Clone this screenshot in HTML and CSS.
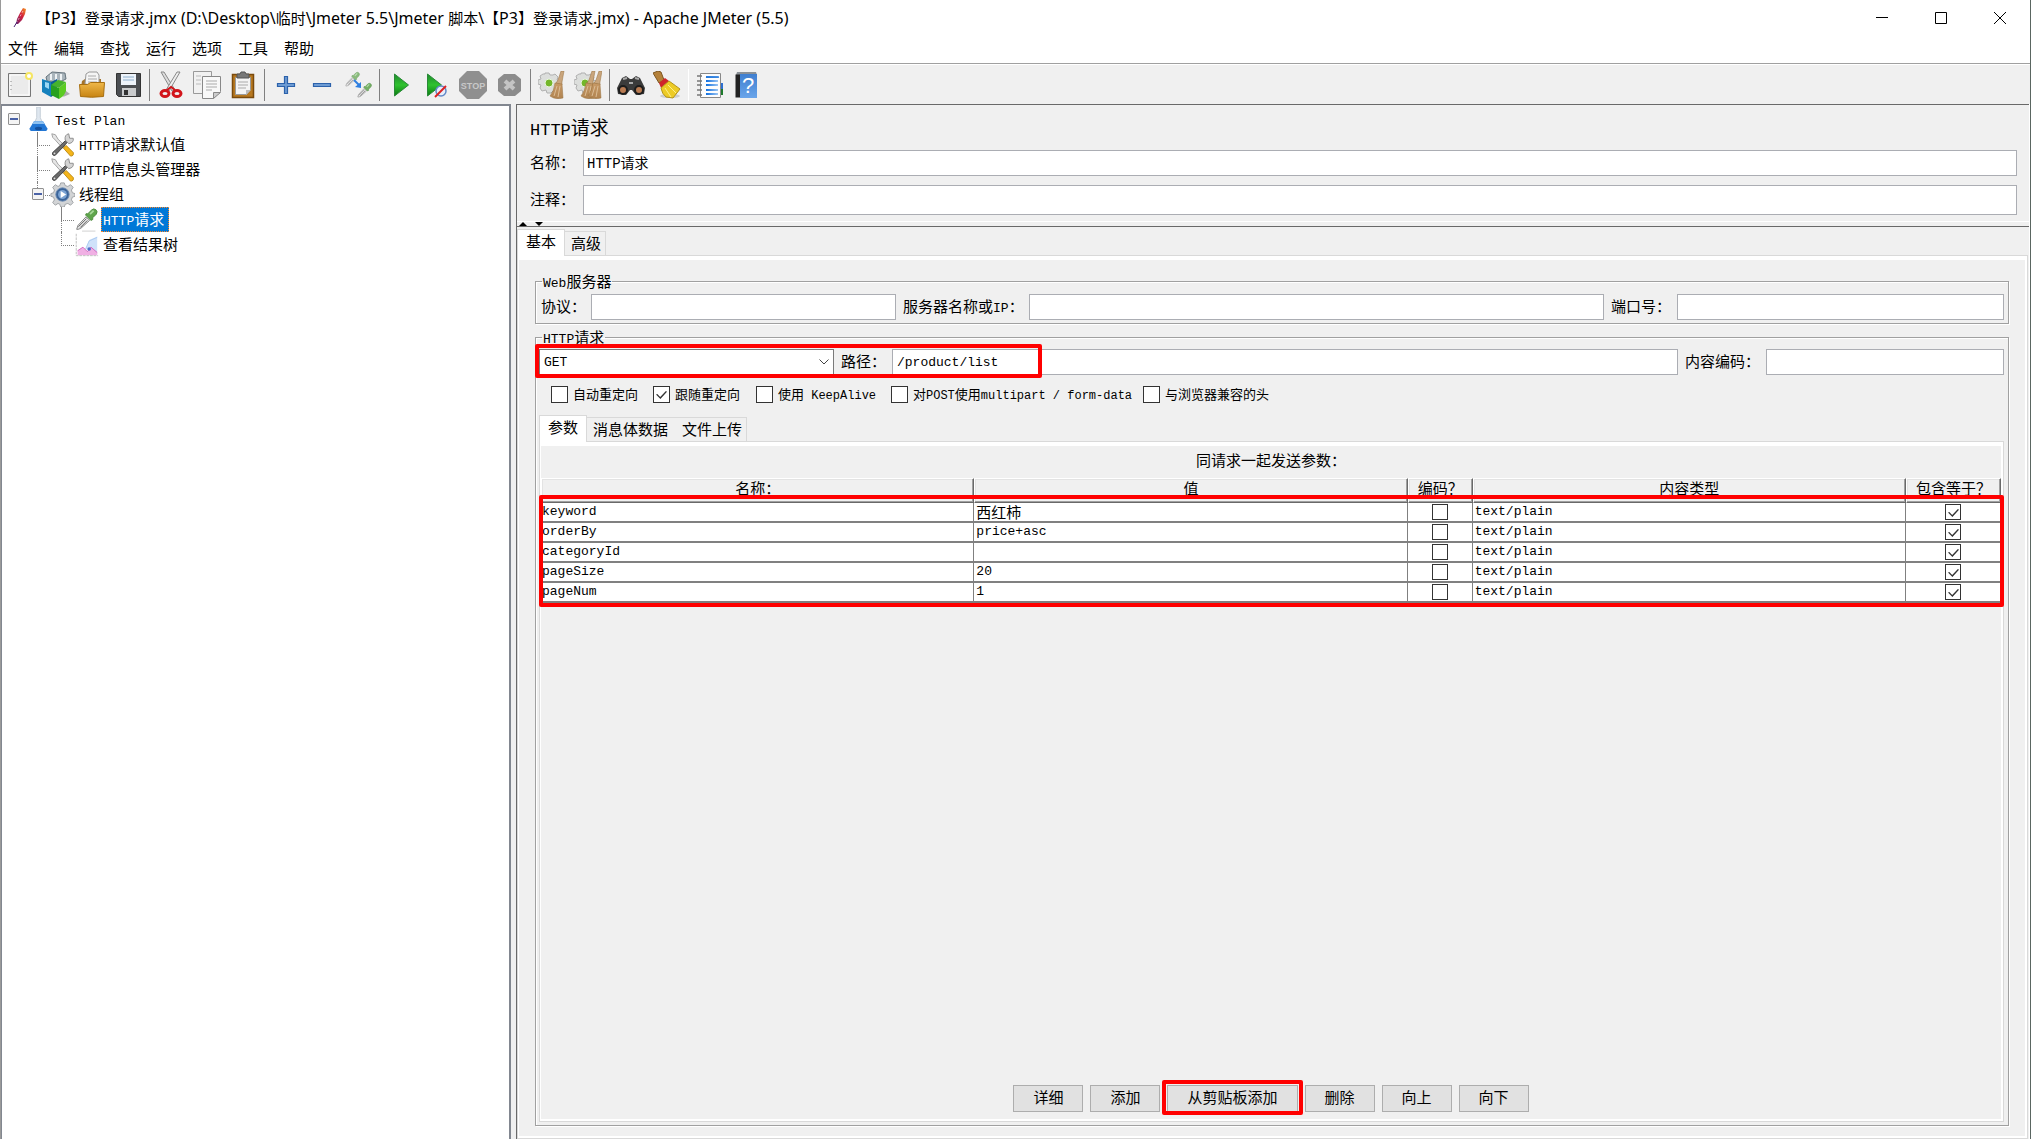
FILE: index.html
```html
<!DOCTYPE html>
<html lang="zh-CN">
<head>
<meta charset="utf-8">
<title>Apache JMeter (5.5)</title>
<link rel="stylesheet" href="styles.css">
</head>
<body>
<svg class="defs" aria-hidden="true">
  <defs>
    <linearGradient id="gold" x1="0" y1="0" x2="0" y2="1"><stop offset="0" stop-color="#efb84a"/><stop offset="1" stop-color="#c78412"/></linearGradient>
    <linearGradient id="green" x1="0" y1="0" x2="0" y2="1"><stop offset="0" stop-color="#1f8a2e"/><stop offset=".5" stop-color="#2fc22f"/><stop offset="1" stop-color="#0b7a12"/></linearGradient>
    <linearGradient id="blue" x1="0" y1="0" x2="0" y2="1"><stop offset="0" stop-color="#3f7fd0"/><stop offset="1" stop-color="#6aa5ea"/></linearGradient>
    <linearGradient id="line-blue" gradientUnits="userSpaceOnUse" x1="10" y1="0" x2="23" y2="0"><stop offset="0" stop-color="#0f6fe0"/><stop offset="1" stop-color="#a8cdf5"/></linearGradient>
    <linearGradient id="straw" x1="0" y1="0" x2="0" y2="1"><stop offset="0" stop-color="#c89a66"/><stop offset="1" stop-color="#b08350"/></linearGradient>
    <linearGradient id="feather" x1="1" y1="0" x2="0" y2="1"><stop offset="0" stop-color="#f59a23"/><stop offset=".45" stop-color="#d3213c"/><stop offset="1" stop-color="#6d2370"/></linearGradient>
    <g id="dropper">
      <path d="M3 25l1.500-4.500 9-9.500 4 4-10 9-3 1z" fill="#e9e9e9" stroke="#777"/>
      <path d="M5 22l9-9M7 23l8-8" stroke="#555" stroke-width="1"/>
      <path d="M13 9l6 6 2-1 0-2 4-4q2-3-.5-5t-5 .5l-4 4-2 0z" fill="#5fa54c" stroke="#4a8a3b"/>
      <path d="M18 8l4-4" stroke="#a8d89a" stroke-width="2"/>
    </g>
    <g id="tools">
      <path d="M2 2l4 1 3 5 8 8-3 2-8-9-3-3z" fill="#e6e6e6" stroke="#999"/>
      <path d="M15 18l3-3 8 8q1 4-3 4z" fill="#f5b51a" stroke="#b8860b"/>
      <path d="M3 23L18 9l2 2L6 26q-4 1-3-3z" fill="#6b6b6b" stroke="#3c3c3c"/>
      <path d="M17 9q-1-6 4-7l1 5 4 0q1 5-5 6z" fill="#d4d4d4" stroke="#888"/>
      <circle cx="5" cy="24" r="1" fill="#ddd"/>
    </g>
    <path id="cog" d="M12 1h4l1 3 3 1 3-2 3 3-2 3 1 3 3 1v3l-3 1-1 3 2 3-3 3-3-2-3 1-1 3h-4l-1-3-2-1-3 2-3-3 2-3-1-3-3-1v-3l3-1 1-3-2-3 3-3 3 2 2-1z"/>
    <g id="smallcog">
      <path d="M7 2h4l1 2h3l2-1 3 3-1 3 3 1v5l-3 1v4h-4l-2 2H9l-1-3-4 1-2-3 1-3-3-1v-4l3-1-1-3 3-2h2z" fill="#dcdedc" stroke="#b0b0b0"/>
      <circle cx="11" cy="12" r="4" fill="#74b72b" stroke="#e9f4df"/>
    </g>
    <g id="brush">
      <path d="M15 0h3l-2 11 0 3-6-2 2-3z" fill="#c9a57c" stroke="#96703f" stroke-width=".5"/>
      <path d="M9 12l7 1 1 14q-8 2-13-2 4-5 5-13z" fill="url(#straw)" stroke="#96703f" stroke-width=".5"/>
      <path d="M11 15L8 25M14 15l-2 11" stroke="#dcbd95"/>
    </g>
  </defs>
</svg>

<div class="window">
  <header class="titlebar">
    <svg class="app-icon" viewBox="0 0 16 20" aria-hidden="true"><path d="M11 0l3 1-1 5-3 6-4 4-2 0 1-5 3-6z" fill="url(#feather)"/><path d="M5 14L2 19" stroke="#4b2470"/><path d="M11 3L5 14" stroke="#fff" stroke-width=".6" stroke-dasharray="2 2"/></svg>
    <h1 class="title"><span class="cn">【</span>P3<span class="cn">】登录请求</span>.jmx (D:\Desktop\<span class="cn">临时</span>\Jmeter 5.5\Jmeter <span class="cn">脚本</span>\<span class="cn">【</span>P3<span class="cn">】登录请求</span>.jmx) - Apache JMeter (5.5)</h1>
    <div class="win-buttons">
      <button type="button" aria-label="最小化"><svg viewBox="0 0 12 12"><path d="M0 5.500h12"/></svg></button>
      <button type="button" aria-label="最大化"><svg viewBox="0 0 12 12"><path d="M.5.5h11v11H.5z"/></svg></button>
      <button type="button" aria-label="关闭"><svg viewBox="0 0 12 12"><path d="M0 0l12 12M12 0L0 12"/></svg></button>
    </div>
  </header>
  <nav class="menubar">
    <button type="button">文件</button><button type="button">编辑</button><button type="button">查找</button><button type="button">运行</button><button type="button">选项</button><button type="button">工具</button><button type="button">帮助</button>
  </nav>

  <div class="toolbar" role="toolbar">
    <button type="button" aria-label="新建"><svg viewBox="0 0 28 28"><path d="M2.500 2.500h22v23h-22z" fill="#ebebeb" stroke="#777"/><path d="M4 4h19v20H4z" fill="none" stroke="#fff"/><path d="M5 10v1M5 14v1M5 18v1" stroke="#888"/><circle cx="23" cy="5" r="3" fill="#fff" stroke="#f5e663" stroke-width="2"/></svg></button>
    <button type="button" aria-label="模板"><svg viewBox="0 0 28 28"><path d="M4 6l6-5 13 1 1 6-8 4-11-2z" fill="#a9b4bb" stroke="#66747d"/><path d="M9 3v6M14 3v6M19 3v6" stroke="#eef2f4" stroke-width="2"/><path d="M0 8l9 3v15l-9-5z" fill="#1681bd"/><path d="M3 11l4 1v6l-4-2z" fill="#9cd8f5"/><path d="M9 11l6-3v14l-6 4z" fill="#0d5d94"/><path d="M9 14l8 3v11l-8-4z" fill="#27a01f"/><path d="M17 17l7-6v12l-7 5z" fill="#5bcb22"/><path d="M9 14l7-5 8 2-7 6z" fill="#46b32c"/><path d="M24 20l4 3-7 3z" fill="#aaa"/></svg></button>
    <button type="button" aria-label="打开"><svg viewBox="0 0 28 28"><path d="M4 10l3-2h16v8H3z" fill="#a5742b"/><path d="M7 13l1-10 3-2h8l2 3v11z" fill="#f5f5f5" stroke="#999"/><path d="M10 5h8M10 8h9M10 11h9" stroke="#aaa"/><path d="M1.500 13.500h8l3-2h14l-1 14q-12 1.500-23 0z" fill="url(#gold)" stroke="#a86f10"/></svg></button>
    <button type="button" aria-label="保存"><svg viewBox="0 0 28 28"><path d="M2.500 2.500h24v23h-22l-2-2z" fill="#4b4e52" stroke="#333"/><path d="M7 3h15v11H7z" fill="#edf3fa"/><path d="M9 6h11M9 9h11" stroke="#8caecc"/><path d="M8 17h14v8H8z" fill="#c9cbcd"/><path d="M10 19h4v5h-4z" fill="#333"/></svg></button>
    <span class="sep"></span>
    <button type="button" aria-label="剪切"><svg viewBox="0 0 28 28"><path d="M4 1l3 0 11 18-3 1z" fill="#ddd" stroke="#888"/><path d="M23 1l-3 0L9 19l3 1z" fill="#eee" stroke="#888"/><ellipse cx="8" cy="22.500" rx="4" ry="3" fill="none" stroke="#d2151b" stroke-width="3"/><ellipse cx="20" cy="22.500" rx="4" ry="3" fill="none" stroke="#d2151b" stroke-width="3"/><path d="M10 19l4-3 4 3" fill="none" stroke="#d2151b" stroke-width="2"/></svg></button>
    <button type="button" aria-label="复制"><svg viewBox="0 0 28 28"><path d="M.5.5h18v22H.5z" fill="#f1f1f1" stroke="#999"/><path d="M3 5h5M3 9h5M3 13h5" stroke="#bbb"/><path d="M9.500 5.500h18v15l-7 7h-11z" fill="#f8f8f8" stroke="#888"/><path d="M13 10h11M13 13h11M13 16h11M13 19h6" stroke="#aaa"/><path d="M20.500 27.500v-6h7z" fill="#ccc" stroke="#888"/></svg></button>
    <button type="button" aria-label="粘贴"><svg viewBox="0 0 28 28"><path d="M3.500 3.500h21v23h-21z" fill="#b7781f" stroke="#7a4a0c" stroke-width="1.500"/><path d="M6.500 6.500h15v12l-4 5h-11z" fill="#f4f4f4" stroke="#999"/><path d="M9 11h10M9 14h10M9 17h8" stroke="#aaa"/><path d="M8 3h3l1-2h4l1 2h3v4H8z" fill="#777" stroke="#555"/><path d="M17 24v-5h5z" fill="#bbb"/></svg></button>
    <span class="sep"></span>
    <button type="button" aria-label="展开"><svg viewBox="0 0 28 28"><path d="M12.500 5.500h3v7h7v3h-7v7h-3v-7h-7v-3h7z" fill="#6d9bd3" stroke="#2c62ab" stroke-width="1.200"/></svg></button>
    <button type="button" aria-label="收起"><svg viewBox="0 0 28 28"><path d="M5.500 12.500h17v3h-17z" fill="#6d9bd3" stroke="#2c62ab" stroke-width="1.200"/></svg></button>
    <button type="button" aria-label="切换"><svg viewBox="0 0 28 28"><g transform="scale(.6)" opacity=".7"><use href="#dropper"/></g><g transform="translate(12 11) scale(.6)" opacity=".85"><use href="#dropper"/></g><path d="M10 9l5 5" stroke="#2f7fe0" stroke-width="2"/><path d="M17 11v6l-6-1z" fill="#2f7fe0"/></svg></button>
    <span class="sep"></span>
    <button type="button" aria-label="启动"><svg viewBox="0 0 28 28"><path d="M7.500 3l14 11-14 11z" fill="url(#green)" stroke="#2a8a38"/></svg></button>
    <button type="button" aria-label="不停顿开始"><svg viewBox="0 0 28 28"><path d="M4.500 3l14 11-14 11z" fill="url(#green)" stroke="#2a8a38"/><circle cx="18" cy="20" r="5" fill="#e8eefa" stroke="#6489c7" stroke-width="1.500"/><path d="M12 26L23 15" stroke="#d22" stroke-width="2"/></svg></button>
    <button type="button" aria-label="停止" disabled><svg viewBox="0 0 28 28"><path d="M8 0h12l8 8v12l-8 8H8l-8-8V8z" fill="#8f8f8f"/><text x="14" y="18" text-anchor="middle" class="stop-text">STOP</text></svg></button>
    <button type="button" aria-label="关闭" disabled><svg viewBox="0 0 28 28"><path d="M9 3h11l6 5v12l-6 5H9l-6-5V8z" fill="#8c8c8c"/><path d="M10 10l9 8M19 10l-9 8" stroke="#c4c4c4" stroke-width="4"/></svg></button>
    <span class="sep"></span>
    <button type="button" aria-label="清除"><svg viewBox="0 0 28 28"><use href="#smallcog"/><g transform="translate(8)"><use href="#brush"/></g></svg></button>
    <button type="button" aria-label="清除全部"><svg viewBox="0 0 28 28"><use href="#smallcog"/><g transform="translate(3)"><use href="#brush"/></g><g transform="translate(10)"><use href="#brush"/></g></svg></button>
    <span class="sep"></span>
    <button type="button" aria-label="查找"><svg viewBox="0 0 28 28"><path d="M5 7l4-2 4 3h2l4-3 4 2 5 10-1 6-8 1-4-5h-2l-4 5-8-1-1-6z" fill="#3b3b3b"/><path d="M6 8l4-1M18 7l4 1M12 12h4" stroke="#aaa" stroke-width="2"/><circle cx="6" cy="19" r="4" fill="#b97b52" stroke="#1c1c1c" stroke-width="2"/><circle cx="22" cy="19" r="4" fill="#b97b52" stroke="#1c1c1c" stroke-width="2"/></svg></button>
    <button type="button" aria-label="重置查找"><svg viewBox="0 0 28 28"><ellipse cx="17" cy="25" rx="10" ry="2" fill="#ccc"/><path d="M0 2l5-2 3 1 3 8-5 3z" fill="#b4813a" stroke="#7e5620"/><path d="M6 12l6-5 4 3-8 7z" fill="#d0242a"/><path d="M8 17l8-7q7 5 11 8l-7 9-7-1q-4-3-5-9z" fill="#edcb25" stroke="#b4941a"/><path d="M12 17l6 9M15 14l8 8" stroke="#fdf08a"/></svg></button>
    <span class="sep light"></span>
    <button type="button" aria-label="函数助手"><svg viewBox="0 0 28 28"><path d="M4.500 2.500h20v24h-20z" fill="#fdfdfd" stroke="#888"/><path d="M25 12h2v6h-2z" fill="#2c6fd1"/><path d="M25 18h2v6h-2z" fill="#1d7a2b"/><path d="M1 5h5M1 10h5M1 14h5M1 19h5M1 24h5" stroke="#777" stroke-width="1.500"/><path d="M10 6h12M10 10h12M10 14h12M10 19h12M10 23h12" stroke="url(#line-blue)" stroke-width="2"/><path d="M10 6h13v.1H10z" stroke="#2a7fe0"/></svg></button>
    <button type="button" aria-label="帮助"><svg viewBox="0 0 28 28"><path d="M5 1h19l1 3H4z" fill="#8a9096"/><path d="M3.500 3.500h5v23h-5z" fill="#222"/><path d="M8 3h17v24H8z" fill="url(#blue)"/><text x="16" y="22" text-anchor="middle" class="help-text">?</text></svg></button>
  </div>

  <main class="workspace">
    <nav class="tree" aria-label="测试计划">
      <ul>
        <li>
          <div class="node"><button type="button" class="toggle" aria-label="收起"></button><svg class="node-icon" viewBox="0 0 28 28"><path d="M12 0h4v12l5 11H7l5-11z" fill="#dfe7ef" stroke="#c2cbd4"/><path d="M9 16h10l5 8q0 3-3 3H7q-3 0-3-3z" fill="#2377d4"/><path d="M9 16h10l2 3H7z" fill="#8cc0f0"/><ellipse cx="14" cy="24" rx="4" ry="2" fill="#134f9c"/></svg><span class="node-text"><span class="en">Test Plan</span></span></div>
          <ul>
            <li><div class="node"><svg class="node-icon" viewBox="0 0 28 28"><use href="#tools"/></svg><span class="node-text"><span class="en">HTTP</span>请求默认值</span></div></li>
            <li><div class="node"><svg class="node-icon" viewBox="0 0 28 28"><use href="#tools"/></svg><span class="node-text"><span class="en">HTTP</span>信息头管理器</span></div></li>
            <li>
              <div class="node"><button type="button" class="toggle" aria-label="收起"></button><svg class="node-icon" viewBox="0 0 28 28"><use href="#cog" fill="#d2d4d6" stroke="#9a9da1"/><circle cx="14" cy="14" r="7.500" fill="#3b6499" stroke="#6f8db5"/><circle cx="14" cy="14" r="5" fill="#7ba3d3"/><path d="M12 10l6 4-6 4z" fill="#fff"/></svg><span class="node-text">线程组</span></div>
              <ul>
                <li><div class="node"><svg class="node-icon" viewBox="0 0 28 28"><use href="#dropper"/><path d="M9 27h15" stroke="#ccc"/></svg><span class="node-text selected"><span class="en">HTTP</span>请求</span></div></li>
                <li><div class="node"><svg class="node-icon" viewBox="0 0 28 28"><path d="M13 19l4-10 9-4v20z" fill="#cfe2fa"/><path d="M4 26v-5l6-4 5 5 4-5 7 6v3z" fill="#f0b0e4"/><path d="M4 21l6-4 5 5 4-5 7 6" fill="none" stroke="#d060ba"/><path d="M13 19l4-9 9-4" fill="none" stroke="#a8c9f0"/><path d="M2.500 2v24.500H27" fill="none" stroke="#bbb" stroke-dasharray="3 1"/><circle cx="17" cy="19" r="2" fill="#4d6dc8"/></svg><span class="node-text">查看结果树</span></div></li>
              </ul>
            </li>
          </ul>
        </li>
      </ul>
    </nav>

    <section class="editor">
      <div class="editor-head">
        <h2><span class="en">HTTP</span>请求</h2>
        <div class="head-grid">
          <label for="name">名称：</label><input id="name" class="field" type="text" value="HTTP请求">
          <label for="comment">注释：</label><input id="comment" class="field tall" type="text">
        </div>
      </div>
      <div class="divider"><svg viewBox="0 0 24 4" aria-hidden="true"><path d="M0 4l4-4 4 4zM16 0h8l-4 4z"/></svg></div>

      <div class="tabs main-tabs">
        <button type="button" class="tab active">基本</button><button type="button" class="tab">高级</button>
      </div>
      <div class="pane main-pane">
        <div class="pane-body main-body">
          <fieldset class="group web">
            <legend><span class="en">Web</span>服务器</legend>
            <div class="server-row">
              <label for="protocol">协议：</label><input id="protocol" class="field" type="text">
              <label for="server">服务器名称或<span class="en">IP</span>：</label><input id="server" class="field" type="text">
              <label for="port">端口号：</label><input id="port" class="field" type="text">
            </div>
          </fieldset>

          <fieldset class="group request">
            <legend><span class="en">HTTP</span>请求</legend>
            <div class="request-row">
              <div class="combo">
                <select class="field" aria-label="方法"><option>GET</option><option>POST</option></select>
                <svg viewBox="0 0 10 6" aria-hidden="true"><path d="M.5.5L5 5 9.500.5"/></svg>
              </div>
              <label for="path">路径：</label><input id="path" class="field" type="text" value="/product/list">
              <label for="encoding">内容编码：</label><input id="encoding" class="field" type="text">
              <span class="mark mark-path"></span>
            </div>
            <div class="options">
              <label><input type="checkbox"><span>自动重定向</span></label>
              <label><input type="checkbox" checked><span>跟随重定向</span></label>
              <label><input type="checkbox"><span>使用<span class="en"> KeepAlive</span></span></label>
              <label><input type="checkbox"><span>对<span class="en">POST</span>使用<span class="en">multipart / form-data</span></span></label>
              <label><input type="checkbox"><span>与浏览器兼容的头</span></label>
            </div>
            <div class="tabs">
              <button type="button" class="tab active">参数</button><button type="button" class="tab joined">消息体数据</button><button type="button" class="tab">文件上传</button>
            </div>
            <div class="pane params-pane">
              <div class="pane-body params">
                <p class="caption" id="params-caption">同请求一起发送参数：</p>
                <div class="table-wrap">
                  <table aria-labelledby="params-caption">
                    <colgroup><col><col><col class="col-encode"><col><col class="col-equals"></colgroup>
                    <thead><tr><th>名称：</th><th>值</th><th>编码？</th><th>内容类型</th><th>包含等于？</th></tr></thead>
                    <tbody>
                      <tr><td>keyword</td><td><span class="cn">西红柿</span></td><td class="tick"><input type="checkbox" aria-label="编码"></td><td>text/plain</td><td class="tick"><input type="checkbox" aria-label="包含等于" checked></td></tr>
                      <tr><td>orderBy</td><td>price+asc</td><td class="tick"><input type="checkbox" aria-label="编码"></td><td>text/plain</td><td class="tick"><input type="checkbox" aria-label="包含等于" checked></td></tr>
                      <tr><td>categoryId</td><td></td><td class="tick"><input type="checkbox" aria-label="编码"></td><td>text/plain</td><td class="tick"><input type="checkbox" aria-label="包含等于" checked></td></tr>
                      <tr><td>pageSize</td><td>20</td><td class="tick"><input type="checkbox" aria-label="编码"></td><td>text/plain</td><td class="tick"><input type="checkbox" aria-label="包含等于" checked></td></tr>
                      <tr><td>pageNum</td><td>1</td><td class="tick"><input type="checkbox" aria-label="编码"></td><td>text/plain</td><td class="tick"><input type="checkbox" aria-label="包含等于" checked></td></tr>
                    </tbody>
                  </table>
                  <span class="mark mark-table"></span>
                </div>
                <div class="actions">
                  <button type="button">详细</button>
                  <button type="button">添加</button>
                  <span class="marked"><button type="button">从剪贴板添加</button><span class="mark mark-button"></span></span>
                  <button type="button">删除</button>
                  <button type="button">向上</button>
                  <button type="button">向下</button>
                </div>
              </div>
            </div>
          </fieldset>
        </div>
      </div>
    </section>
  </main>
</div>
</body>
</html>
```
FILE: styles.css
```css
* { box-sizing: border-box; }

body {
  margin: 0;
  color: #000;
  background: #f0f0f0;
  font: 15px/20px "Noto Sans CJK SC", sans-serif;
}

button, input, select {
  margin: 0;
  color: inherit;
  font: inherit;
}

button { padding: 0; border: 0; background: none; white-space: nowrap; }
ul { margin: 0; padding: 0; list-style: none; }
.defs { position: absolute; width: 0; height: 0; }
.en { font-family: "Liberation Mono", monospace; font-size: 13px; line-height: 0; }

.window {
  display: flex;
  flex-direction: column;
  min-height: 100vh;
  border-left: 1px solid #9a9a9a;
  border-right: 1px solid #5a6661;
}

/* Title and menu */
.titlebar {
  display: flex;
  align-items: center;
  height: 36px;
  padding-left: 11px;
  background: #fff;
}
.app-icon { width: 16px; height: 20px; margin-right: 8px; }
.title {
  flex: 1;
  margin: 0;
  padding-bottom: 1px;
  font: 400 16px/20px "Noto Sans", sans-serif;
  white-space: nowrap;
}
.title .cn { font: 15px/0 "Noto Sans CJK SC", sans-serif; }
.win-buttons { display: flex; margin-right: 1px; }
.win-buttons button { width: 59px; height: 36px; }
.win-buttons svg {
  display: block;
  width: 12px;
  height: 12px;
  margin: 0 auto;
  fill: none;
  stroke: #000;
}
.menubar {
  display: flex;
  gap: 16px;
  height: 28px;
  padding: 2px 7px 5px;
  border-bottom: 1px solid #a0a0a0;
  background: #fff;
}

/* Toolbar */
.toolbar {
  display: flex;
  align-items: center;
  height: 40px;
  padding-left: 1px;
  border-top: 1px solid #fff;
}
.toolbar button { width: 36px; height: 36px; }
.toolbar svg { display: block; width: 28px; height: 28px; margin: 0 auto; }
.sep { width: 1px; height: 32px; margin: 0 3px; background: #808080; }
.sep.light { background: #fff; }
.stop-text { font: 700 9px "Liberation Sans", sans-serif; fill: #c8c8c8; }
.help-text { font: 22px "Liberation Sans", sans-serif; fill: #fff; }

/* Split view */
.workspace {
  display: grid;
  grid-template-columns: 510px minmax(0, 1fr);
  column-gap: 5px;
  flex: 1;
}
.tree {
  padding: 1px 1px 0;
  border: 2px solid #828790;
  border-width: 2px 2px 0 1px;
  background: #fff;
}
.tree li { position: relative; }
.tree ul ul { padding-left: 24px; }
.tree ul ul > li::before {
  content: "";
  position: absolute;
  top: 0;
  left: 10px;
  width: 12px;
  height: 13px;
  border: 1px dotted #808080;
  border-width: 0 0 1px 1px;
}
.tree ul ul > li:not(:last-child)::after {
  content: "";
  position: absolute;
  top: 0;
  bottom: 0;
  left: 10px;
  border-left: 1px dotted #808080;
}
.node {
  position: relative;
  display: flex;
  align-items: center;
  height: 25px;
  padding-left: 23px;
}
.toggle {
  position: absolute;
  top: 6px;
  left: 5px;
  width: 12px;
  height: 12px;
  border: 1px solid #919191;
  border-radius: 1px;
  background: linear-gradient(#4b63a7, #4b63a7) center / 8px 2px no-repeat #f4f4f4;
}
.node-icon { width: 25px; height: 25px; }
.node-text { margin-left: 3px; padding: 0 1px 2px; line-height: 21px; }
.node-text.selected {
  margin-left: 2px;
  padding-right: 4px;
  border: 1px dotted #ff8728;
  color: #fff;
  background: #0078d7;
}

/* Editor */
.editor {
  display: flex;
  flex-direction: column;
  min-width: 0;
  margin-right: 1px;
  border-top: 1px solid #696969;
  border-left: 1px solid #696969;
  box-shadow: 1px 0 0 #fff;
}
.editor-head { padding: 7px 12px 6px 13px; border-bottom: 1px solid #fff; }
.editor-head h2 { margin: 0 0 8px; font-size: 19px; font-weight: 400; line-height: 30px; }
.editor-head h2 .en { font-size: 17px; line-height: 0; }
.head-grid {
  display: grid;
  grid-template-columns: 53px minmax(0, 1fr);
  row-gap: 9px;
  align-items: center;
}
.head-grid .field { padding: 0 3px 2px; font-size: 14px; }
.field {
  width: 100%;
  min-width: 0;
  height: 26px;
  padding: 0 4px;
  border: 1px solid #abadb3;
  border-radius: 0;
  background: #fff;
  font: 13px "Liberation Mono", "Noto Sans CJK SC", monospace;
}
.field.tall { height: 30px; }
label { padding-bottom: 2px; white-space: nowrap; }
.divider { height: 5px; border-bottom: 1px solid #696969; }
.divider svg { display: block; width: 24px; height: 4px; margin-left: 2px; }

/* Tabs */
.tabs { display: flex; align-items: flex-end; }
.tab {
  height: 24px;
  padding: 0 4px 1px 6px;
  border: 1px solid #d9d9d9;
  border-width: 1px 1px 0 0;
}
.tab.joined { padding-right: 8px; border-right: 0; }
.tab.active {
  z-index: 1;
  height: 27px;
  margin-bottom: -1px;
  padding: 0 8px 4px;
  border-left-width: 1px;
  background: #fff;
}
.main-tabs { padding-top: 2px; }
.pane {
  display: flex;
  flex: 1;
  padding: 4px 2px 2px 1px;
  border: 1px solid #d9d9d9;
  background: #fff;
}
.pane-body {
  display: flex;
  flex: 1;
  flex-direction: column;
  min-width: 0;
  background: #f0f0f0;
}
.main-pane { margin-right: 1px; }
.main-body { padding: 11px 16px 10px 16px; }

/* Groups */
.group {
  min-width: 0;
  margin: 0;
  border: 1px solid #a0a0a0;
  box-shadow: 1px 1px 0 #fff, inset 1px 1px 0 #fff;
}
.group legend { margin-left: 3px; padding: 0 1px; }
.web { padding: 3px 4px 3px 5px; }
.web legend { margin-left: 1px; }
.request {
  display: flex;
  flex: 1;
  flex-direction: column;
  margin-top: 3px;
  padding: 2px 4px 3px 3px;
}
.server-row {
  display: grid;
  grid-template-columns: 50px minmax(0, 305fr) 133px minmax(0, 575fr) 73px minmax(0, 327fr);
  align-items: center;
}
.server-row label:not(:first-child), .request-row label { padding-left: 7px; }
.request-row {
  position: relative;
  display: grid;
  grid-template-columns: minmax(0, 295fr) 58px minmax(0, 786fr) 88px minmax(0, 238fr);
  align-items: center;
}
.combo { position: relative; }
.combo select { display: block; appearance: none; border-color: #7a7a7a; }
.combo svg {
  position: absolute;
  top: 10px;
  right: 5px;
  width: 10px;
  height: 6px;
  fill: none;
  stroke: #444;
  pointer-events: none;
}
.options {
  display: grid;
  grid-template-columns: 102px 103px 135px 252px auto;
  margin: 11px 0 12px 12px;
  font-size: 13px;
  line-height: 17px;
}
.options label { display: flex; align-items: center; height: 17px; padding: 0; }
.options label > span { padding-bottom: 3px; }
.options .en { font-size: 12px; }
input[type="checkbox"] {
  flex: none;
  width: 17px;
  height: 17px;
  margin-right: 5px;
  border: 1px solid #333;
  appearance: none;
  background: #fff;
}
input[type="checkbox"]:checked::before {
  content: "";
  display: block;
  width: 11px;
  height: 8px;
  margin: 4px 2px;
  background: #333;
  clip-path: polygon(0 45%, 12% 38%, 38% 75%, 90% 0, 100% 10%, 40% 100%);
}

/* Parameters */
.caption { margin: 0; padding: 4px 0 8px; text-align: center; }
.table-wrap { position: relative; }
table { width: 100%; border-spacing: 0; table-layout: fixed; }
.col-encode { width: 65px; }
.col-equals { width: 95px; }
th {
  height: 25px;
  padding: 0 0 5px;
  border: 1px solid #fff;
  border-right-color: #696969;
  border-bottom-color: #696969;
  box-shadow: inset -1px -1px 0 #a0a0a0, inset 1px 1px 0 #e3e3e3;
  font-weight: 400;
  line-height: 18px;
  white-space: nowrap;
}
td {
  height: 20px;
  padding: 0 1px;
  border: 1px solid #808080;
  border-width: 0 1px 2px 0;
  background: #fff;
  font: 13px/18px "Liberation Mono", monospace;
}
td + td { padding-left: 2px; }
td .cn { display: block; font: 15px/16px "Noto Sans CJK SC", sans-serif; }
td.tick { padding: 0; }
.tick input[type="checkbox"] { display: block; width: 16px; height: 16px; margin: 0 auto; }
.actions { display: flex; justify-content: center; gap: 7px; margin-top: auto; padding-bottom: 7px; }
.actions button {
  height: 27px;
  padding: 0 19px 3px;
  border: 1px solid #adadad;
  background: #e1e1e1;
  line-height: 20px;
}
.marked { position: relative; }

/* Red annotation frames */
.mark {
  position: absolute;
  border: 4px solid #f00;
  border-radius: 2px;
  pointer-events: none;
}
.mark-path { top: -5px; bottom: -3px; left: -4px; width: 507px; }
.mark-table { top: 17px; right: -3px; bottom: -4px; left: -2px; }
.mark-button { top: -5px; right: -5px; bottom: -3px; left: -5px; }
```
